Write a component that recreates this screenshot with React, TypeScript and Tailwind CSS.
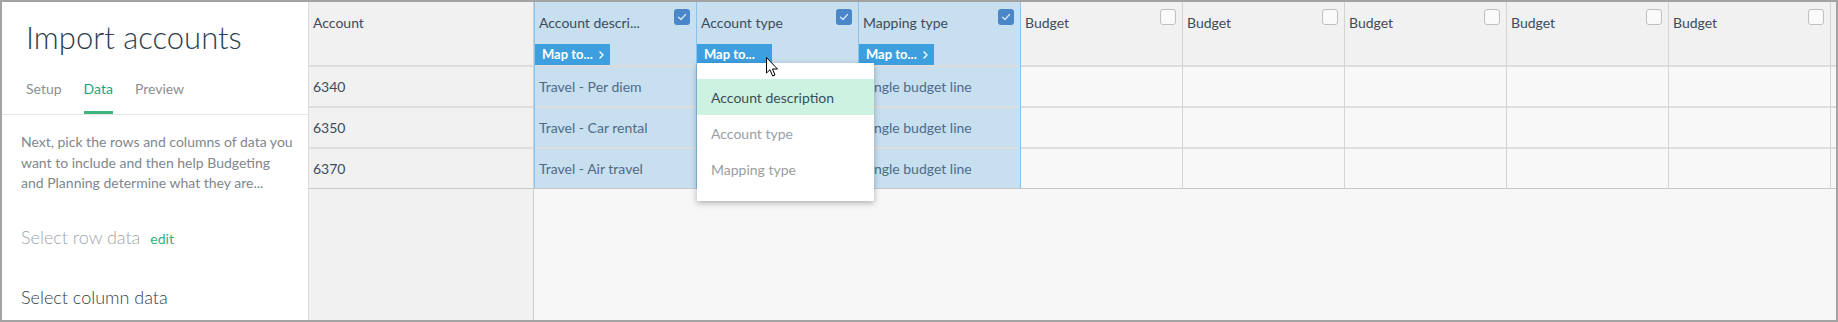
import React from 'react'

const font = { fontFamily: 'Lato, "Open Sans", Arial, sans-serif' }

type Col = {
  title: string
  selected: boolean
  cells: string[]
  mapTo?: 'chevron' | 'open'
  blueLeft?: boolean
}

const columns: Col[] = [
  { title: 'Account descri...', selected: true, mapTo: 'chevron', cells: ['Travel - Per diem', 'Travel - Car rental', 'Travel - Air travel'] },
  { title: 'Account type', selected: true, mapTo: 'open', cells: ['', '', ''] },
  { title: 'Mapping type', selected: true, mapTo: 'chevron', cells: ['Single budget line', 'Single budget line', 'Single budget line'] },
  { title: 'Budget', selected: false, blueLeft: true, cells: ['', '', ''] },
  { title: 'Budget', selected: false, cells: ['', '', ''] },
  { title: 'Budget', selected: false, cells: ['', '', ''] },
  { title: 'Budget', selected: false, cells: ['', '', ''] },
  { title: 'Budget', selected: false, cells: ['', '', ''] },
]

function Checkbox({ checked }: { checked: boolean }) {
  if (checked) {
    return (
      <div className="mt-[7px] flex h-4 w-4 shrink-0 items-center justify-center rounded-[3px] bg-[#4a87c9]">
        <svg width="10" height="8" viewBox="0 0 10 8" fill="none">
          <path d="M1.5 4.2 L4 6.5 L8.5 1.5" stroke="#dbe9f7" strokeWidth="1.2" strokeLinecap="round" strokeLinejoin="round" />
        </svg>
      </div>
    )
  }
  return <div className="mt-[7px] h-4 w-4 shrink-0 rounded-[3px] border border-[#bfbfbf] bg-[#fafafa]" />
}

function MapTo({ chevron }: { chevron: boolean }) {
  return (
    <div className="flex h-[21px] w-[75px] items-center gap-[6px] bg-[#3e9fe0] pl-[7px] text-[13px] font-bold text-white">
      <span>Map to...</span>
      {chevron && (
        <svg width="5" height="8" viewBox="0 0 5 8" fill="none">
          <path d="M1 1 L4 4 L1 7" stroke="white" strokeWidth="1.4" strokeLinecap="round" strokeLinejoin="round" />
        </svg>
      )}
    </div>
  )
}

function Dropdown() {
  const items = ['Account description', 'Account type', 'Mapping type']
  return (
    <div className="absolute left-[1px] top-[61px] z-10 w-[177px] bg-white pb-[14px] pt-4 shadow-[0_2px_6px_rgba(0,0,0,0.3)]">
      {items.map((it, i) => (
        <div
          key={it}
          className={
            i === 0
              ? 'flex h-9 items-center bg-[#ccf3e2] pl-[14px] text-[14px] text-[#3d4b5c]'
              : 'flex h-9 items-center pl-[14px] text-[14px] text-[#9a9ea2]'
          }
        >
          {it}
        </div>
      ))}
    </div>
  )
}

function Cursor() {
  return (
    <svg className="absolute left-[70px] top-[55px] z-20" width="13" height="21" viewBox="0 0 13 21">
      <path d="M0.5 0.5 L0.5 16 L4 12.7 L6.6 19 L9 18 L6.5 12 L11.5 12 Z" fill="white" stroke="black" strokeWidth="1" strokeLinejoin="round" />
    </svg>
  )
}

function rowClass(i: number) {
  return i === 2 ? 'h-[40px] border-b border-[#c8c8c8]' : 'h-[41px] border-b-2 border-[#dedede]'
}

function DataColumn({ col }: { col: Col }) {
  const blue = col.selected
  const border = blue || col.blueLeft ? 'border-[#8cc3ec]' : 'border-[#d4d4d4]'
  return (
    <div className="relative w-[162px] shrink-0">
      <div className={`flex flex-col border-l ${border}`}>
        <div className={`flex h-[65px] flex-col justify-between border-b-2 border-[#dcdcdc] ${blue ? 'bg-[#c8dff0]' : 'bg-[#f1f1f1]'}`}>
          <div className="flex items-start justify-between pl-[4px] pr-[6px]">
            <span className="pt-[12px] text-[14px] leading-[18px] text-[#3d4b5c]">{col.title}</span>
            <Checkbox checked={col.selected} />
          </div>
          {col.mapTo && <MapTo chevron={col.mapTo === 'chevron'} />}
        </div>
        {col.cells.map((c, i) => (
          <div
            key={i}
            className={`flex items-center px-[4px] text-[14px] text-[#4f6b86] ${rowClass(i)} ${blue ? 'bg-[#c8dff0]' : 'bg-[#f8f8f8]'}`}
          >
            <span className="whitespace-nowrap">{c}</span>
          </div>
        ))}
      </div>
      {col.mapTo === 'open' && (
        <>
          <Dropdown />
          <Cursor />
        </>
      )}
    </div>
  )
}

export default function App() {
  return (
    <div className="flex h-[322px] w-[1838px] overflow-hidden border-2 border-[#a3a3a3] bg-white" style={font}>
      {/* Left panel */}
      <div className="flex w-[307px] shrink-0 flex-col border-r border-[#dcdcdc] bg-white">
        <h1 className="pl-6 pt-[17px] text-[31px] font-light leading-[36px] text-[#2f3e4e]">Import accounts</h1>
        <div className="mt-[25px] flex items-start gap-[22px] border-b border-[#e6e6e6] pl-6">
          <span className="pb-[17px] text-[14px] leading-[17px] text-[#8a8f94]">Setup</span>
          <span className="border-b-[3px] border-[#3db57d] pb-[14px] text-[14px] leading-[17px] text-[#1aa383]">Data</span>
          <span className="pb-[17px] text-[14px] leading-[17px] text-[#8a8f94]">Preview</span>
        </div>
        <p className="pl-[19px] pt-[17px] text-[14px] leading-[20.5px] text-[#80878d]">
          Next, pick the rows and columns of data you
          <br />
          want to include and then help Budgeting
          <br />
          and Planning determine what they are...
        </p>
        <div className="mt-[32px] flex items-baseline gap-[10px] pl-[19px] leading-[22px]">
          <span className="text-[18px] font-light text-[#a0a5aa]">Select row data</span>
          <span className="text-[14px] text-[#2fb17a]">edit</span>
        </div>
        <div className="mt-[36px] pl-[19px] text-[18px] font-light leading-[22px] text-[#2f3e4e]">Select column data</div>
      </div>

      {/* Table */}
      <div className="flex flex-1 bg-[#f7f7f7]">
        <div className="flex w-[225px] shrink-0 flex-col border-r border-[#d0d0d0] bg-[#f1f1f1]">
          <div className="h-[65px] border-b-2 border-[#dcdcdc] pl-[4px] pt-[12px] text-[14px] leading-[18px] text-[#3d4b5c]">Account</div>
          {['6340', '6350', '6370'].map((a, i) => (
            <div key={a} className={`flex items-center pl-[4px] text-[14px] text-[#3d4b5c] ${rowClass(i)}`}>
              {a}
            </div>
          ))}
        </div>
        {columns.map((c, i) => (
          <DataColumn key={i} col={c} />
        ))}
        <div className="flex-1">
          <div className="flex flex-col border-l border-[#d4d4d4]">
            <div className="h-[65px] border-b-2 border-[#dcdcdc] bg-[#f1f1f1]" />
            {[0, 1, 2].map((i) => (
              <div key={i} className={`bg-[#f8f8f8] ${rowClass(i)}`} />
            ))}
          </div>
        </div>
      </div>
    </div>
  )
}
